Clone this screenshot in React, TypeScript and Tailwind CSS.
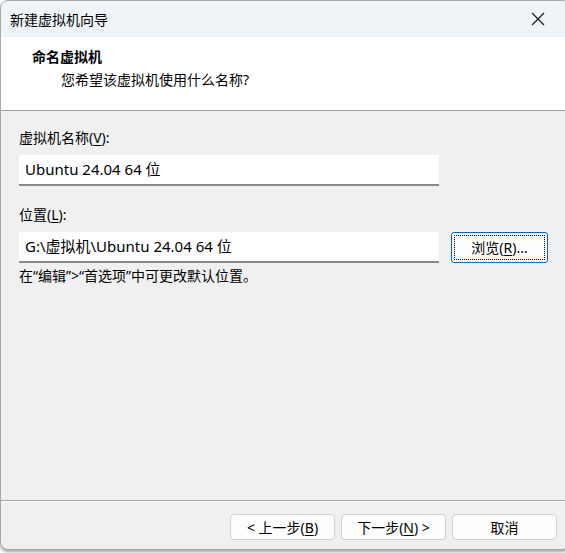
import React from 'react';

const font = { fontFamily: '"Noto Sans", "Noto Sans CJK SC", sans-serif' };

const Btn: React.FC<{ children: React.ReactNode }> = ({ children }) => (
  <button className="flex h-[26px] w-[105px] items-center justify-center rounded-[4px] border border-[#d0d0d0] bg-[#fdfdfd] text-[14px] text-black">
    {children}
  </button>
);

const App: React.FC = () => {
  return (
    <div className="h-[553px] w-[565px] overflow-hidden bg-white" style={font}>
      <div className="flex h-[550px] w-[570px] flex-col overflow-hidden rounded-lg border border-[#a8a8a8] bg-[#f0f0f0] shadow-[0_2px_3px_rgba(0,0,0,0.35)]">
        {/* Title bar */}
        <div className="flex h-[36px] shrink-0 items-center justify-between bg-[#eef4f8] pl-[9px] pr-[22px]">
          <span className="text-[14px] text-black">新建虚拟机向导</span>
          <svg width="14" height="14" viewBox="0 0 14 14" className="mr-[2px]">
            <path d="M1 1 L13 13 M13 1 L1 13" stroke="#1a1a1a" strokeWidth="1.2" />
          </svg>
        </div>

        {/* Header */}
        <div className="h-[73px] shrink-0 bg-white pl-[31px] pt-[9px]">
          <div className="text-[14px] font-bold leading-[22px] text-black">命名虚拟机</div>
          <div className="pl-[29px] pt-[1px] text-[14px] leading-[22px] text-black">您希望该虚拟机使用什么名称?</div>
        </div>
        <div className="h-[2px] shrink-0 border-t border-[#a0a0a0] bg-[#f0f0f0]" />

        {/* Content */}
        <div className="flex flex-1 flex-col px-[18px] pt-[16px] text-[14px] text-black">
          <div className="leading-[20px]">
            虚拟机名称(<span className="underline underline-offset-2">V</span>):
          </div>
          <div className="mt-[7px] flex h-[31px] w-[420px] items-center border-b-2 border-[#8a8a8a] bg-white pl-[6px] text-[15px]">
            Ubuntu 24.04 64 位
          </div>

          <div className="mt-[19px] leading-[20px]">
            位置(<span className="underline underline-offset-2">L</span>):
          </div>
          <div className="mt-[7px] flex items-center gap-[12px]">
            <div className="flex h-[31px] w-[420px] items-center border-b-2 border-[#8a8a8a] bg-white pl-[6px] text-[15px]">
              G:\虚拟机\Ubuntu 24.04 64 位
            </div>
            <button className="flex h-[31px] w-[97px] items-center justify-center rounded-[3px] border border-[#0067c0] bg-[#fdfdfd] p-[2px]">
              <span className="flex h-full w-full items-center justify-center border border-dotted border-black text-[14px]">
                浏览(<span className="underline underline-offset-2">R</span>)...
              </span>
            </button>
          </div>
          <div className="mt-[3px] leading-[20px]">在“编辑”&gt;“首选项”中可更改默认位置。</div>
        </div>

        {/* Footer */}
        <div className="h-[2px] shrink-0 border-t border-[#a0a0a0] bg-white" />
        <div className="flex h-[47px] shrink-0 items-start justify-end gap-[6px] pr-[12px] pt-[12px]">
          <Btn>
            &lt; 上一步(<span className="underline underline-offset-2">B</span>)
          </Btn>
          <Btn>
            下一步(<span className="underline underline-offset-2">N</span>) &gt;
          </Btn>
          <Btn>取消</Btn>
        </div>
      </div>
    </div>
  );
};

export default App;
